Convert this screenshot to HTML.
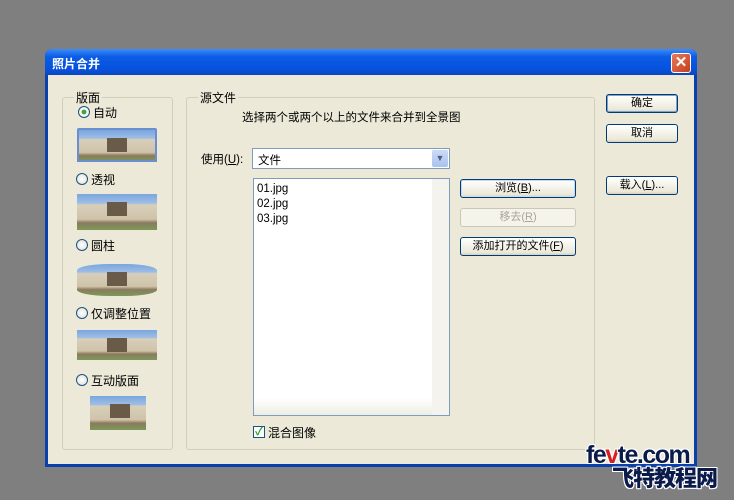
<!DOCTYPE html>
<html><head><meta charset="utf-8"><style>
*{box-sizing:border-box;margin:0;padding:0}
body{width:734px;height:500px;background:#7f7f7f;position:relative;overflow:hidden;font-family:"Liberation Sans","Noto Sans CJK SC",sans-serif;font-size:11px;color:#000}
.a{position:absolute}
.dlg{left:45px;top:49px;width:652px;height:418px;background:#0a3fae;border-radius:7px 7px 0 0}
.title{left:0;top:0;width:652px;height:26px;border-radius:7px 7px 0 0;background:linear-gradient(#3c8cf7,#0b5ce6 30%,#0751db 80%,#0a46c0);color:#fff;font-weight:bold;font-size:12px;padding:6px 0 0 7px}
.client{left:3px;top:26px;width:646px;height:389px;background:#ece9d8}
.close{left:626px;top:4px;width:20px;height:20px;border:1px solid #fff;border-radius:3px;background:linear-gradient(135deg,#e8795a,#c4401c);color:#fff;font-size:15px;text-align:center;line-height:17px;font-weight:bold}
.grp{border:1px solid #d0d0bf;border-radius:3px}
.lbl{background:#ece9d8;padding:0 2px}
.btn{border:1px solid #003c74;border-radius:3px;background:linear-gradient(#fff,#ece9d8 85%,#d6d0c5);text-align:center;line-height:16px}
.dis{border-color:#c9c7ba;color:#a8a699;background:#f5f4ea}
.rad{width:12px;height:12px;border:1px solid #1c5180;border-radius:50%;background:radial-gradient(#fff,#dcdcd4)}
.th{width:80px;height:30px;background:linear-gradient(#7aa6de 0,#9dbde6 25%,#d8cfba 30%,#cfc3a9 70%,#8a7a5e 80%,#7a9a58 100%)}
.th i{position:absolute;left:30px;top:8px;width:20px;height:14px;background:#6a5a48}
.wm{font-weight:900;color:#0a1a4a;text-shadow:1px 0 #fff,-1px 0 #fff,0 1px #fff,0 -1px #fff,1px 1px #fff,-1px -1px #fff,1px -1px #fff,-1px 1px #fff}
</style></head><body>
<div class="a dlg">
 <div class="a title">照片合并</div>
 <div class="a close">✕</div>
 <div class="a client"></div>
</div>
<div class="a grp" style="left:62px;top:97px;width:111px;height:353px"></div>
<div class="a lbl" style="left:74px;top:89px;font-size:12px">版面</div>
<div class="a rad" style="left:78px;top:106px;background:radial-gradient(#3aa83a 30%,#fff 40%,#dcdcd4)"></div><div class="a" style="left:93px;top:104px;font-size:12px">自动</div>
<div class="a th" style="left:77px;top:130px;width:80px;height:32px"><i></i></div>
<div class="a" style="left:77px;top:128px;width:80px;height:34px;border:2px solid #6a8ed0;border-radius:2px;background:transparent"></div>
<div class="a rad" style="left:76px;top:173px"></div><div class="a" style="left:91px;top:171px;font-size:12px">透视</div>
<div class="a th" style="left:77px;top:194px;height:36px"><i></i></div>
<div class="a rad" style="left:76px;top:239px"></div><div class="a" style="left:91px;top:237px;font-size:12px">圆柱</div>
<div class="a th" style="left:77px;top:264px;height:32px;border-radius:40%/20%"><i></i></div>
<div class="a rad" style="left:76px;top:307px"></div><div class="a" style="left:91px;top:305px;font-size:12px">仅调整位置</div>
<div class="a th" style="left:77px;top:330px;height:30px"><i></i></div>
<div class="a rad" style="left:76px;top:374px"></div><div class="a" style="left:91px;top:372px;font-size:12px">互动版面</div>
<div class="a th" style="left:90px;top:396px;width:56px;height:34px"><i style="left:20px"></i></div>
<div class="a grp" style="left:186px;top:97px;width:409px;height:353px"></div>
<div class="a lbl" style="left:198px;top:89px;font-size:12px">源文件</div>
<div class="a" style="left:242px;top:109px;font-size:11.5px">选择两个或两个以上的文件来合并到全景图</div>
<div class="a" style="left:201px;top:151px;font-size:11.5px">使用(<u>U</u>):</div>
<div class="a" style="left:252px;top:148px;width:198px;height:21px;border:1px solid #7f9db9;background:#fff;padding:3px 5px;font-size:11.5px">文件</div>
<div class="a" style="left:432px;top:150px;width:16px;height:17px;background:linear-gradient(#cbdbf7,#a9c2ee);border-radius:2px;color:#4d6185;font-size:9px;text-align:center;line-height:17px">▼</div>
<div class="a" style="left:253px;top:178px;width:197px;height:238px;border:1px solid #7f9db9;background:#fff;padding:3px 3px;font-size:11.5px;line-height:15px">01.jpg<br>02.jpg<br>03.jpg</div>
<div class="a" style="left:432px;top:179px;width:17px;height:236px;background:#f4f3ee"></div>
<div class="a" style="left:254px;top:398px;width:178px;height:17px;background:linear-gradient(#fff,#eeede5)"></div>
<div class="a btn" style="left:460px;top:179px;width:116px;height:19px;box-shadow:inset 0 0 0 1px #c7d8f3">浏览(<u>B</u>)...</div>
<div class="a btn dis" style="left:460px;top:208px;width:116px;height:19px">移去(<u>R</u>)</div>
<div class="a btn" style="left:460px;top:237px;width:116px;height:19px">添加打开的文件(<u>F</u>)</div>
<div class="a" style="left:253px;top:426px;width:12px;height:12px;border:1px solid #1c5180;background:#fff;color:#21a121;font-size:11px;line-height:10px;text-align:center;font-weight:bold">✓</div>
<div class="a" style="left:268px;top:424px;font-size:12px">混合图像</div>
<div class="a btn" style="left:606px;top:94px;width:72px;height:19px;box-shadow:inset 0 0 0 1px #7da2ce">确定</div>
<div class="a btn" style="left:606px;top:124px;width:72px;height:19px">取消</div>
<div class="a btn" style="left:606px;top:176px;width:72px;height:19px">载入(<u>L</u>)...</div>
<div class="a wm" style="left:586px;top:442px;font-size:25px;letter-spacing:-1.5px;line-height:26px">fe<span style="color:#d81e1e">v</span>te.com</div>
<div class="a wm" style="left:612px;top:466px;font-size:22px;line-height:26px;letter-spacing:-1px">飞特教程网</div>
</body></html>
